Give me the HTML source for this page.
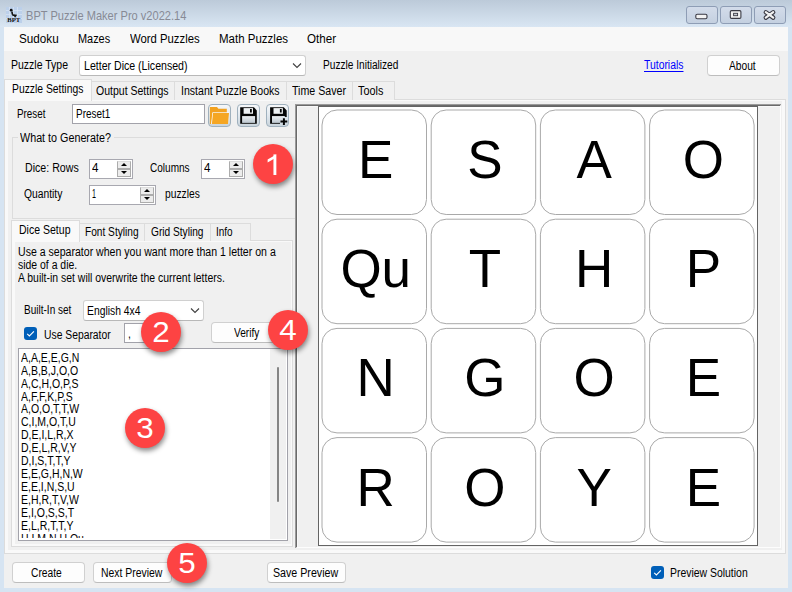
<!DOCTYPE html>
<html><head><meta charset="utf-8"><style>
html,body{margin:0;padding:0;}
body{width:792px;height:592px;overflow:hidden;position:relative;background:#d6e4f2;font-family:"Liberation Sans",sans-serif;}
.r{position:absolute;}
.t{position:absolute;white-space:nowrap;line-height:1;transform-origin:0 0;}
.bd{position:absolute;width:40px;height:40px;line-height:40px;text-align:center;font-size:30.2px;color:#fff;transform:scaleX(1.04);}
.badge{position:absolute;width:40px;height:40px;border-radius:50%;background:#fd4343;box-shadow:1px 3px 5px rgba(0,0,0,0.45);}
</style></head><body>
<div class="r" style="left:0px;top:0px;width:792px;height:27px;background:linear-gradient(#bccad9,#d9e6f3);"></div>
<svg class="r" style="left:6px;top:7px" width="16" height="16" viewBox="0 0 16 16">
<rect x="0" y="0" width="16" height="16" fill="#bcd0ea"/>
<g stroke="#dae5f3" stroke-width="0.7"><path d="M3.5 0V16M7.5 0V16M11.5 0V16M0 3.5H16M0 7.5H16M0 11.5H16"/></g>
<circle cx="5.2" cy="3.2" r="1.4" fill="#111"/>
<path d="M5.9 4.6L6.4 7.2Q6.6 8 7.4 8.1L9.8 8.4L8.7 10.2" fill="none" stroke="#111" stroke-width="1.6"/>
<text x="7.8" y="15.2" font-family="Liberation Serif" font-weight="bold" font-size="5.6" text-anchor="middle" textLength="13" lengthAdjust="spacingAndGlyphs" fill="#111">BPT</text>
</svg>
<div class="t" style="left:26.30px;top:9.20px;font-size:13px;color:#878a95;transform:scaleX(0.8514);">BPT Puzzle Maker Pro v2022.14</div>
<div class="r" style="left:686px;top:6px;width:32px;height:18px;box-sizing:border-box;border:1px solid #8e9db5;border-radius:3px;background:linear-gradient(#d3dcea,#c4d0e0);"></div>
<div class="r" style="left:720px;top:6px;width:32px;height:18px;box-sizing:border-box;border:1px solid #8e9db5;border-radius:3px;background:linear-gradient(#d3dcea,#c4d0e0);"></div>
<div class="r" style="left:754px;top:6px;width:32px;height:18px;box-sizing:border-box;border:1px solid #8e9db5;border-radius:3px;background:linear-gradient(#d3dcea,#c4d0e0);"></div>
<svg class="r" style="left:686px;top:6px" width="100" height="18" viewBox="0 0 100 18"><rect x="9.8" y="8.3" width="11.2" height="4.4" rx="1.5" fill="#f2f2f2" stroke="#3a3a44" stroke-width="1.1"/><rect x="44.3" y="4.6" width="10.6" height="7.8" rx="1.2" fill="#f2f2f2" stroke="#3a3a44" stroke-width="1.1"/><rect x="47.6" y="7.3" width="4" height="2.4" fill="#c8ccd4" stroke="#3a3a44" stroke-width="0.9"/><path d="M79.8 6.2L87.2 11.6M87.2 6.2L79.8 11.6" stroke="#3a3a44" stroke-width="4.4" stroke-linecap="round"/><path d="M79.8 6.2L87.2 11.6M87.2 6.2L79.8 11.6" stroke="#f2f2f2" stroke-width="2.2" stroke-linecap="round"/></svg>
<div class="r" style="left:4px;top:27px;width:784px;height:561px;background:#f0f0f0;"></div>
<div class="r" style="left:4px;top:27px;width:784px;height:24px;background:#f8f8f8;"></div>
<div class="t" style="left:19.00px;top:32.84px;font-size:12px;color:#000;transform:scaleX(0.9754);">Sudoku</div>
<div class="t" style="left:78.40px;top:32.84px;font-size:12px;color:#000;transform:scaleX(0.9093);">Mazes</div>
<div class="t" style="left:130.00px;top:32.84px;font-size:12px;color:#000;transform:scaleX(0.9431);">Word Puzzles</div>
<div class="t" style="left:219.00px;top:32.84px;font-size:12px;color:#000;transform:scaleX(0.9583);">Math Puzzles</div>
<div class="t" style="left:307.00px;top:32.84px;font-size:12px;color:#000;transform:scaleX(0.9667);">Other</div>
<div class="t" style="left:11.10px;top:58.64px;font-size:12px;color:#000;transform:scaleX(0.8756);">Puzzle Type</div>
<div class="r" style="left:79px;top:55px;width:227px;height:21px;box-sizing:border-box;background:#fff;border:1px solid #d0d0d0;border-bottom-color:#b8b8b8;border-radius:3px;"></div>
<div class="t" style="left:83.50px;top:59.84px;font-size:12px;color:#000;transform:scaleX(0.8816);">Letter Dice (Licensed)</div>
<svg class="r" style="left:292px;top:62px" width="10" height="7"><path d="M1 1.5 L5 5.5 L9 1.5" fill="none" stroke="#404040" stroke-width="1.1"/></svg>
<div class="t" style="left:323.30px;top:58.54px;font-size:12px;color:#000;transform:scaleX(0.8434);">Puzzle Initialized</div>
<div class="t" style="left:644.10px;top:59.34px;font-size:12px;color:#0000ff;transform:scaleX(0.8662);text-decoration:underline;text-underline-offset:2px;">Tutorials</div>
<div class="r" style="left:707px;top:55px;width:73px;height:21px;box-sizing:border-box;background:#fdfdfd;border:1px solid #d0d0d0;border-bottom-color:#bdbdbd;border-radius:4px;"></div>
<div class="t" style="left:729.20px;top:59.64px;font-size:12px;color:#000;transform:scaleX(0.8503);">About</div>
<div class="r" style="left:4px;top:99px;width:782px;height:455px;box-sizing:border-box;background:#f9f9f9;border:1px solid #dcdcdc;"></div>
<div class="r" style="left:91px;top:81px;width:84px;height:19px;box-sizing:border-box;background:#f0f0f0;border:1px solid #dcdcdc;border-bottom:none;"></div>
<div class="r" style="left:174px;top:81px;width:113px;height:19px;box-sizing:border-box;background:#f0f0f0;border:1px solid #dcdcdc;border-bottom:none;"></div>
<div class="r" style="left:286px;top:81px;width:67px;height:19px;box-sizing:border-box;background:#f0f0f0;border:1px solid #dcdcdc;border-bottom:none;"></div>
<div class="r" style="left:352px;top:81px;width:43px;height:19px;box-sizing:border-box;background:#f0f0f0;border:1px solid #dcdcdc;border-bottom:none;"></div>
<div class="r" style="left:4px;top:79px;width:88px;height:22px;box-sizing:border-box;background:#f9f9f9;border:1px solid #dcdcdc;border-bottom:none;"></div>
<div class="t" style="left:12.00px;top:82.54px;font-size:12px;color:#000;transform:scaleX(0.8622);">Puzzle Settings</div>
<div class="t" style="left:95.50px;top:84.54px;font-size:12px;color:#000;transform:scaleX(0.8767);">Output Settings</div>
<div class="t" style="left:181.00px;top:84.54px;font-size:12px;color:#000;transform:scaleX(0.8796);">Instant Puzzle Books</div>
<div class="t" style="left:292.00px;top:84.54px;font-size:12px;color:#000;transform:scaleX(0.8867);">Time Saver</div>
<div class="t" style="left:358.40px;top:84.54px;font-size:12px;color:#000;transform:scaleX(0.9036);">Tools</div>
<div class="r" style="left:8px;top:101px;width:774px;height:449px;background:#f0f0f0;"></div>
<div class="t" style="left:17.30px;top:107.54px;font-size:12px;color:#000;transform:scaleX(0.8184);">Preset</div>
<div class="r" style="left:72px;top:104px;width:133px;height:20px;box-sizing:border-box;background:#fff;border:1px solid #a2a2aa;"></div>
<div class="t" style="left:75.70px;top:107.54px;font-size:12px;color:#000;transform:scaleX(0.8285);">Preset1</div>
<div class="r" style="left:208px;top:104px;width:23px;height:23px;box-sizing:border-box;border:1px solid #9fb0bd;border-radius:4px;background:linear-gradient(#f6f8fa,#e1e8ee 50%,#c9d4dc);"></div>
<div class="r" style="left:237px;top:104px;width:23px;height:23px;box-sizing:border-box;border:1px solid #9fb0bd;border-radius:4px;background:linear-gradient(#f6f8fa,#e1e8ee 50%,#c9d4dc);"></div>
<div class="r" style="left:266px;top:104px;width:23px;height:23px;box-sizing:border-box;border:1px solid #9fb0bd;border-radius:4px;background:linear-gradient(#f6f8fa,#e1e8ee 50%,#c9d4dc);"></div>
<svg class="r" style="left:208px;top:104px" width="82" height="23" viewBox="0 0 82 23">
<defs><linearGradient id="lg" x1="0" y1="0" x2="0" y2="1"><stop offset="0" stop-color="#eef1f4"/><stop offset="1" stop-color="#bcc6ce"/></linearGradient></defs>
<path d="M1.9 2.9H9L10.4 4.8H18.8V8.6H4.6L3.4 19.9H1.9Z" fill="#f2a221"/>
<path d="M4.4 8.4H21.2L20.1 19.9H3.1Z" fill="#ffffff" opacity="0.9"/>
<path d="M5 9H21L20 19.9H3.9Z" fill="#f5a623"/>
<g transform="translate(29,0)">
<path d="M3.2 3.2H16.9L19.8 6.5V19.8H3.2Z" fill="#050505"/>
<rect x="6.6" y="4.1" width="9.4" height="5.7" fill="#eef1f3"/>
<rect x="13" y="5" width="1.8" height="3.5" fill="#050505"/>
<rect x="5.1" y="12.1" width="13" height="6.8" fill="url(#lg)"/>
</g>
<g transform="translate(58,0)">
<path d="M4.1 3.2H17.8L20.7 6.5V13H14V19.8H4.1Z" fill="#050505"/>
<rect x="7.5" y="4.1" width="9.4" height="5.7" fill="#eef1f3"/>
<rect x="13.9" y="5" width="1.8" height="3.5" fill="#050505"/>
<rect x="6" y="12.1" width="12" height="6.8" fill="url(#lg)"/>
<path d="M16 12.2H19.1V19.5H16Z" fill="#dfe5ea"/>
<path d="M17.9 14.2V21M14.5 17.6H21.3" stroke="#050505" stroke-width="2"/>
</g>
</svg>
<div class="r" style="left:12px;top:137px;width:284px;height:82px;box-sizing:border-box;border:1px solid #dcdcdc;border-radius:0;"></div>
<div class="r" style="left:18px;top:130px;width:96px;height:10px;background:#f0f0f0;"></div>
<div class="t" style="left:20.10px;top:131.54px;font-size:12px;color:#000;transform:scaleX(0.8964);">What to Generate?</div>
<div class="t" style="left:24.50px;top:161.54px;font-size:12px;color:#000;transform:scaleX(0.8847);">Dice: Rows</div>
<div class="r" style="left:89px;top:159px;width:44px;height:20px;box-sizing:border-box;background:#fff;border:1px solid #a8a8b0;"></div><div class="r" style="left:117px;top:161px;width:14px;height:16px;box-sizing:border-box;background:#ececec;border:1px solid #acacac;border-top-color:#dcdcdc;"></div><div class="r" style="left:117px;top:168px;width:14px;height:2px;background:#acacac;"></div><svg class="r" style="left:117px;top:159px" width="14" height="20"><path d="M4 7h6l-3-3z" fill="#000"/><path d="M4 12h6l-3 3z" fill="#000"/></svg>
<div class="t" style="left:91.50px;top:161.54px;font-size:12px;color:#000;transform:scaleX(0.9701);">4</div>
<div class="t" style="left:150.40px;top:161.54px;font-size:12px;color:#000;transform:scaleX(0.8372);">Columns</div>
<div class="r" style="left:201px;top:159px;width:44px;height:20px;box-sizing:border-box;background:#fff;border:1px solid #a8a8b0;"></div><div class="r" style="left:229px;top:161px;width:14px;height:16px;box-sizing:border-box;background:#ececec;border:1px solid #acacac;border-top-color:#dcdcdc;"></div><div class="r" style="left:229px;top:168px;width:14px;height:2px;background:#acacac;"></div><svg class="r" style="left:229px;top:159px" width="14" height="20"><path d="M4 7h6l-3-3z" fill="#000"/><path d="M4 12h6l-3 3z" fill="#000"/></svg>
<div class="t" style="left:203.50px;top:161.54px;font-size:12px;color:#000;transform:scaleX(0.9701);">4</div>
<div class="t" style="left:23.90px;top:188.44px;font-size:12px;color:#000;transform:scaleX(0.8591);">Quantity</div>
<div class="r" style="left:89px;top:185px;width:67px;height:20px;box-sizing:border-box;background:#fff;border:1px solid #a8a8b0;"></div><div class="r" style="left:140px;top:187px;width:14px;height:16px;box-sizing:border-box;background:#ececec;border:1px solid #acacac;border-top-color:#dcdcdc;"></div><div class="r" style="left:140px;top:194px;width:14px;height:2px;background:#acacac;"></div><svg class="r" style="left:140px;top:185px" width="14" height="20"><path d="M4 7h6l-3-3z" fill="#000"/><path d="M4 12h6l-3 3z" fill="#000"/></svg>
<div class="t" style="left:92.00px;top:188.44px;font-size:12px;color:#000;transform:scaleX(0.5970);">1</div>
<div class="t" style="left:165.40px;top:188.44px;font-size:12px;color:#000;transform:scaleX(0.8550);">puzzles</div>
<div class="r" style="left:11px;top:240px;width:282px;height:307px;box-sizing:border-box;background:#f9f9f9;border:1px solid #dcdcdc;"></div>
<div class="r" style="left:79px;top:223px;width:66px;height:18px;box-sizing:border-box;background:#f0f0f0;border:1px solid #dcdcdc;border-bottom:none;"></div>
<div class="r" style="left:144px;top:223px;width:67px;height:18px;box-sizing:border-box;background:#f0f0f0;border:1px solid #dcdcdc;border-bottom:none;"></div>
<div class="r" style="left:210px;top:223px;width:41px;height:18px;box-sizing:border-box;background:#f0f0f0;border:1px solid #dcdcdc;border-bottom:none;"></div>
<div class="r" style="left:11px;top:220px;width:69px;height:22px;box-sizing:border-box;background:#f9f9f9;border:1px solid #dcdcdc;border-bottom:none;"></div>
<div class="t" style="left:19.20px;top:224.04px;font-size:12px;color:#000;transform:scaleX(0.8773);">Dice Setup</div>
<div class="t" style="left:84.50px;top:225.54px;font-size:12px;color:#000;transform:scaleX(0.8454);">Font Styling</div>
<div class="t" style="left:150.50px;top:225.54px;font-size:12px;color:#000;transform:scaleX(0.8468);">Grid Styling</div>
<div class="t" style="left:216.40px;top:225.54px;font-size:12px;color:#000;transform:scaleX(0.8300);">Info</div>
<div class="r" style="left:15px;top:242px;width:276px;height:302px;background:#f0f0f0;"></div>
<div class="t" style="left:18.00px;top:245.84px;font-size:12px;color:#000;transform:scaleX(0.8802);">Use a separator when you want more than 1 letter on a</div>
<div class="t" style="left:17.60px;top:258.64px;font-size:12px;color:#000;transform:scaleX(0.8700);">side of a die.</div>
<div class="t" style="left:18.00px;top:272.34px;font-size:12px;color:#000;transform:scaleX(0.8711);">A built-in set will overwrite the current letters.</div>
<div class="t" style="left:24.20px;top:303.54px;font-size:12px;color:#000;transform:scaleX(0.8360);">Built-In set</div>
<div class="r" style="left:83px;top:300px;width:121px;height:21px;box-sizing:border-box;background:#fff;border:1px solid #d0d0d0;border-bottom-color:#b8b8b8;border-radius:3px;"></div>
<div class="t" style="left:87.30px;top:305.44px;font-size:12px;color:#000;transform:scaleX(0.8613);">English 4x4</div>
<svg class="r" style="left:190px;top:307px" width="10" height="7"><path d="M1 1.5 L5 5.5 L9 1.5" fill="none" stroke="#404040" stroke-width="1.1"/></svg>
<div class="r" style="left:24px;top:327px;width:13px;height:13px;background:#005fb8;border-radius:3px;"></div>
<svg class="r" style="left:24px;top:327px" width="13" height="13"><path d="M3.2 6.8 L5.4 9 L9.9 4.4" fill="none" stroke="#fff" stroke-width="1.1"/></svg>
<div class="t" style="left:43.70px;top:328.54px;font-size:12px;color:#000;transform:scaleX(0.8618);">Use Separator</div>
<div class="r" style="left:124px;top:323px;width:50px;height:20px;box-sizing:border-box;background:#fff;border:1px solid #a2a2aa;"></div>
<div class="t" style="left:127.80px;top:328.34px;font-size:12px;color:#000;transform:scaleX(0.8700);">,</div>
<div class="r" style="left:211px;top:322px;width:78px;height:21px;box-sizing:border-box;background:#fdfdfd;border:1px solid #d0d0d0;border-bottom-color:#bdbdbd;border-radius:4px;"></div>
<div class="t" style="left:233.70px;top:327.34px;font-size:12px;color:#000;transform:scaleX(0.8433);">Verify</div>
<div class="r" style="left:18px;top:348px;width:270px;height:193px;box-sizing:border-box;background:#fff;border:1px solid #a2a2aa;"></div>
<div class="r" style="left:270px;top:349px;width:16px;height:190px;background:#f0f0f0;"></div>
<div class="r" style="left:277px;top:367px;width:2px;height:135px;background:#858585;border-radius:1px;"></div>
<div class="r" style="left:19px;top:349px;width:251px;height:189px;overflow:hidden;">
<div class="t" style="left:2.00px;top:2.74px;font-size:12px;color:#000;transform:scaleX(0.8740);">A,A,E,E,G,N</div>
<div class="t" style="left:2.00px;top:15.67px;font-size:12px;color:#000;transform:scaleX(0.8740);">A,B,B,J,O,O</div>
<div class="t" style="left:2.00px;top:28.60px;font-size:12px;color:#000;transform:scaleX(0.8740);">A,C,H,O,P,S</div>
<div class="t" style="left:2.00px;top:41.53px;font-size:12px;color:#000;transform:scaleX(0.8740);">A,F,F,K,P,S</div>
<div class="t" style="left:2.00px;top:54.46px;font-size:12px;color:#000;transform:scaleX(0.8740);">A,O,O,T,T,W</div>
<div class="t" style="left:2.00px;top:67.39px;font-size:12px;color:#000;transform:scaleX(0.8740);">C,I,M,O,T,U</div>
<div class="t" style="left:2.00px;top:80.32px;font-size:12px;color:#000;transform:scaleX(0.8740);">D,E,I,L,R,X</div>
<div class="t" style="left:2.00px;top:93.25px;font-size:12px;color:#000;transform:scaleX(0.8740);">D,E,L,R,V,Y</div>
<div class="t" style="left:2.00px;top:106.18px;font-size:12px;color:#000;transform:scaleX(0.8740);">D,I,S,T,T,Y</div>
<div class="t" style="left:2.00px;top:119.11px;font-size:12px;color:#000;transform:scaleX(0.8740);">E,E,G,H,N,W</div>
<div class="t" style="left:2.00px;top:132.04px;font-size:12px;color:#000;transform:scaleX(0.8740);">E,E,I,N,S,U</div>
<div class="t" style="left:2.00px;top:144.97px;font-size:12px;color:#000;transform:scaleX(0.8740);">E,H,R,T,V,W</div>
<div class="t" style="left:2.00px;top:157.90px;font-size:12px;color:#000;transform:scaleX(0.8740);">E,I,O,S,S,T</div>
<div class="t" style="left:2.00px;top:170.83px;font-size:12px;color:#000;transform:scaleX(0.8740);">E,L,R,T,T,Y</div>
<div class="t" style="left:2.00px;top:183.76px;font-size:12px;color:#000;transform:scaleX(0.8740);">H,I,M,N,U,Qu</div>
</div>
<div class="r" style="left:295px;top:104px;width:486px;height:444px;box-sizing:border-box;background:#f0f0f0;border-top:2px solid #6a6a6a;border-left:2px solid #6a6a6a;border-right:1px solid #fdfdfd;border-bottom:1px solid #fdfdfd;box-shadow:inset 1px 1px 0 #f8f8f8;"></div>
<div class="r" style="left:295px;top:104px;width:486px;height:1px;background:#9a9a9a;"></div>
<div class="r" style="left:295px;top:104px;width:1px;height:444px;background:#9a9a9a;"></div>
<svg class="r" style="left:318px;top:106px" width="440" height="440" viewBox="0 0 440 440"><rect x="0.5" y="0.5" width="439" height="439" fill="#fff" stroke="#646464" stroke-width="1"/><rect x="4.0" y="4.0" width="104.5" height="104.5" rx="15" ry="15" fill="#fff" stroke="#a9a9a9" stroke-width="1"/><text x="57.75" y="72.0" text-anchor="middle" font-family="Liberation Sans" font-size="53" fill="#000">E</text><rect x="113.2" y="4.0" width="104.5" height="104.5" rx="15" ry="15" fill="#fff" stroke="#a9a9a9" stroke-width="1"/><text x="166.95" y="72.0" text-anchor="middle" font-family="Liberation Sans" font-size="53" fill="#000">S</text><rect x="222.4" y="4.0" width="104.5" height="104.5" rx="15" ry="15" fill="#fff" stroke="#a9a9a9" stroke-width="1"/><text x="276.15" y="72.0" text-anchor="middle" font-family="Liberation Sans" font-size="53" fill="#000">A</text><rect x="331.6" y="4.0" width="104.5" height="104.5" rx="15" ry="15" fill="#fff" stroke="#a9a9a9" stroke-width="1"/><text x="385.35" y="72.0" text-anchor="middle" font-family="Liberation Sans" font-size="53" fill="#000">O</text><rect x="4.0" y="113.2" width="104.5" height="104.5" rx="15" ry="15" fill="#fff" stroke="#a9a9a9" stroke-width="1"/><text x="57.75" y="181.2" text-anchor="middle" font-family="Liberation Sans" font-size="53" fill="#000">Qu</text><rect x="113.2" y="113.2" width="104.5" height="104.5" rx="15" ry="15" fill="#fff" stroke="#a9a9a9" stroke-width="1"/><text x="166.95" y="181.2" text-anchor="middle" font-family="Liberation Sans" font-size="53" fill="#000">T</text><rect x="222.4" y="113.2" width="104.5" height="104.5" rx="15" ry="15" fill="#fff" stroke="#a9a9a9" stroke-width="1"/><text x="276.15" y="181.2" text-anchor="middle" font-family="Liberation Sans" font-size="53" fill="#000">H</text><rect x="331.6" y="113.2" width="104.5" height="104.5" rx="15" ry="15" fill="#fff" stroke="#a9a9a9" stroke-width="1"/><text x="385.35" y="181.2" text-anchor="middle" font-family="Liberation Sans" font-size="53" fill="#000">P</text><rect x="4.0" y="222.4" width="104.5" height="104.5" rx="15" ry="15" fill="#fff" stroke="#a9a9a9" stroke-width="1"/><text x="57.75" y="290.4" text-anchor="middle" font-family="Liberation Sans" font-size="53" fill="#000">N</text><rect x="113.2" y="222.4" width="104.5" height="104.5" rx="15" ry="15" fill="#fff" stroke="#a9a9a9" stroke-width="1"/><text x="166.95" y="290.4" text-anchor="middle" font-family="Liberation Sans" font-size="53" fill="#000">G</text><rect x="222.4" y="222.4" width="104.5" height="104.5" rx="15" ry="15" fill="#fff" stroke="#a9a9a9" stroke-width="1"/><text x="276.15" y="290.4" text-anchor="middle" font-family="Liberation Sans" font-size="53" fill="#000">O</text><rect x="331.6" y="222.4" width="104.5" height="104.5" rx="15" ry="15" fill="#fff" stroke="#a9a9a9" stroke-width="1"/><text x="385.35" y="290.4" text-anchor="middle" font-family="Liberation Sans" font-size="53" fill="#000">E</text><rect x="4.0" y="331.6" width="104.5" height="104.5" rx="15" ry="15" fill="#fff" stroke="#a9a9a9" stroke-width="1"/><text x="57.75" y="399.6" text-anchor="middle" font-family="Liberation Sans" font-size="53" fill="#000">R</text><rect x="113.2" y="331.6" width="104.5" height="104.5" rx="15" ry="15" fill="#fff" stroke="#a9a9a9" stroke-width="1"/><text x="166.95" y="399.6" text-anchor="middle" font-family="Liberation Sans" font-size="53" fill="#000">O</text><rect x="222.4" y="331.6" width="104.5" height="104.5" rx="15" ry="15" fill="#fff" stroke="#a9a9a9" stroke-width="1"/><text x="276.15" y="399.6" text-anchor="middle" font-family="Liberation Sans" font-size="53" fill="#000">Y</text><rect x="331.6" y="331.6" width="104.5" height="104.5" rx="15" ry="15" fill="#fff" stroke="#a9a9a9" stroke-width="1"/><text x="385.35" y="399.6" text-anchor="middle" font-family="Liberation Sans" font-size="53" fill="#000">E</text></svg>
<div class="r" style="left:12px;top:562px;width:73px;height:21px;box-sizing:border-box;background:#fdfdfd;border:1px solid #d0d0d0;border-bottom-color:#bdbdbd;border-radius:4px;"></div>
<div class="r" style="left:93px;top:562px;width:79px;height:21px;box-sizing:border-box;background:#fdfdfd;border:1px solid #d0d0d0;border-bottom-color:#bdbdbd;border-radius:4px;"></div>
<div class="r" style="left:267px;top:562px;width:79px;height:21px;box-sizing:border-box;background:#fdfdfd;border:1px solid #d0d0d0;border-bottom-color:#bdbdbd;border-radius:4px;"></div>
<div class="t" style="left:31.30px;top:567.34px;font-size:12px;color:#000;transform:scaleX(0.8528);">Create</div>
<div class="t" style="left:100.50px;top:567.34px;font-size:12px;color:#000;transform:scaleX(0.8670);">Next Preview</div>
<div class="t" style="left:273.20px;top:567.34px;font-size:12px;color:#000;transform:scaleX(0.8883);">Save Preview</div>
<div class="r" style="left:651px;top:566px;width:13px;height:13px;background:#005fb8;border-radius:3px;"></div>
<svg class="r" style="left:651px;top:566px" width="13" height="13"><path d="M3.2 6.8 L5.4 9 L9.9 4.4" fill="none" stroke="#fff" stroke-width="1.1"/></svg>
<div class="t" style="left:670.30px;top:566.84px;font-size:12px;color:#000;transform:scaleX(0.8691);">Preview Solution</div>
<div class="badge" style="left:253px;top:144px;"></div>
<svg class="r" style="left:253px;top:144px" width="40" height="40"><path d="M21.9 10.4V31" stroke="#fff" stroke-width="2.9"/><path d="M23.3 10.4 L14.6 15.6 L14.6 18.6 L21.5 14.4 Z" fill="#fff"/></svg>
<div class="badge" style="left:141px;top:312px;"></div>
<div class="bd" style="left:141px;top:311.5px;">2</div>
<div class="badge" style="left:125px;top:408px;"></div>
<div class="bd" style="left:125px;top:407.5px;">3</div>
<div class="badge" style="left:268px;top:310px;"></div>
<div class="bd" style="left:268px;top:309.5px;">4</div>
<div class="badge" style="left:167px;top:543px;"></div>
<div class="bd" style="left:167px;top:542.5px;">5</div>
</body></html>
